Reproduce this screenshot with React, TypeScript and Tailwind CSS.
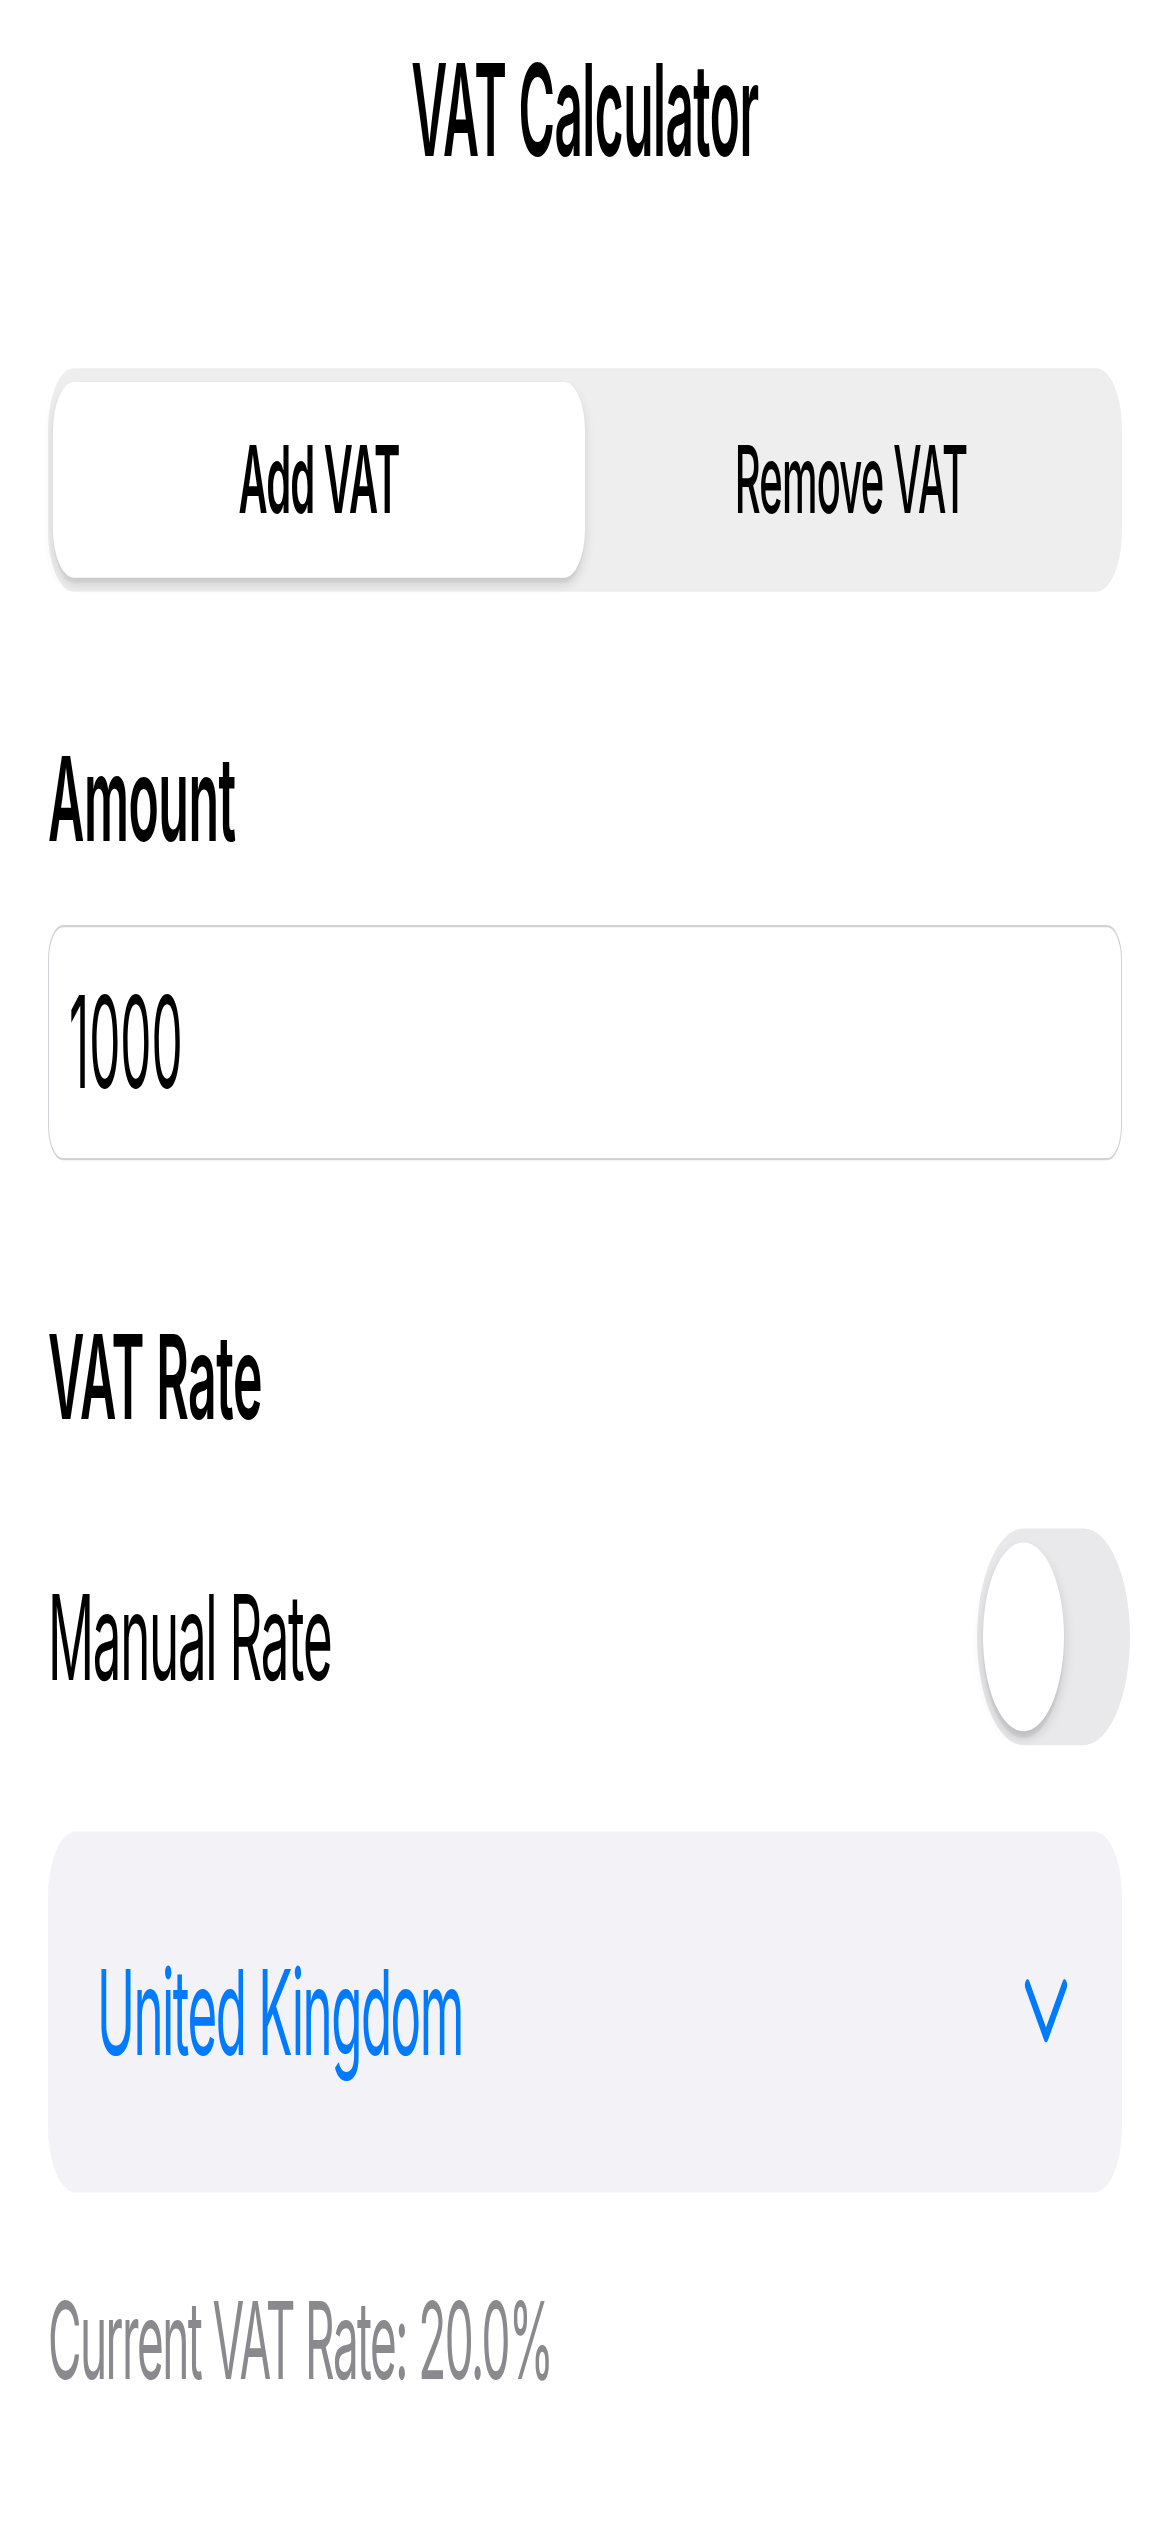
import React from "react";

function Chevron() {
  return (
    <svg width="44" height="28" viewBox="0 0 44 28" fill="none">
      <path d="M3.5 3 L22 25 L40.5 3" stroke="#007aff" strokeWidth="5" strokeLinecap="round" strokeLinejoin="round" />
    </svg>
  );
}

export default function App() {
  return (
    <div className="w-full h-[2532px] overflow-hidden bg-white">
      <div
        className="w-full h-[1087px] origin-top scale-y-[2.33] px-12 flex flex-col text-black"
        style={{ fontFamily: "Inter, 'Noto Sans', sans-serif" }}
      >
        <div className="mt-[20px] flex justify-center">
          <h1 className="inline-block origin-center scale-x-[0.9] text-[55px] leading-none font-semibold tracking-[-0.01em]">
            VAT Calculator
          </h1>
        </div>

        <div className="mt-[82.5px] h-[96px] rounded-[26px] bg-[#eeeeef] py-[6px] px-[5px] flex">
          <div className="flex-1 rounded-[21px] bg-white shadow-[0_3px_7px_rgba(0,0,0,0.12),0_2px_1px_rgba(0,0,0,0.04)] flex items-center justify-center text-[40px] font-semibold leading-none tracking-[-0.02em]">
            Add VAT
          </div>
          <div className="flex-1 flex items-center justify-center text-[40px] font-medium leading-none tracking-[-0.02em]">
            Remove VAT
          </div>
        </div>

        <div className="mt-[64px] text-[50px] leading-none font-semibold tracking-[-0.01em]">Amount</div>

        <div className="mt-[29.5px] h-[101px] border border-[#d1d1d6] rounded-[15px] px-[20px] flex items-center">
          <span className="inline-block origin-left scale-x-[0.9] text-[55px] leading-none">1000</span>
        </div>

        <div className="mt-[67.5px] text-[50px] leading-none font-semibold tracking-[-0.01em]">VAT Rate</div>

        <div className="mt-[40.5px] flex items-center justify-between">
          <span className="text-[51px] leading-none tracking-[-0.025em]">Manual Rate</span>
          <div className="-mr-[8px] w-[153px] h-[93px] rounded-full bg-[#e9e9eb] p-[6px] flex items-center">
            <div className="w-[81px] h-[81px] rounded-full bg-white shadow-[0_3px_8px_rgba(0,0,0,0.15),0_3px_1px_rgba(0,0,0,0.06)]" />
          </div>
        </div>

        <div className="mt-[36.5px] h-[155px] rounded-[28px] bg-[#f2f2f7] pl-[49px] pr-[54px] flex items-center justify-between">
          <span className="text-[51px] leading-none text-[#007aff] tracking-[-0.03em]">United Kingdom</span>
          <Chevron />
        </div>

        <div className="mt-[40.5px] text-[46px] leading-none text-[#8a8a8e] tracking-[-0.035em]">
          Current VAT Rate: 20.0%
        </div>
      </div>
    </div>
  );
}
